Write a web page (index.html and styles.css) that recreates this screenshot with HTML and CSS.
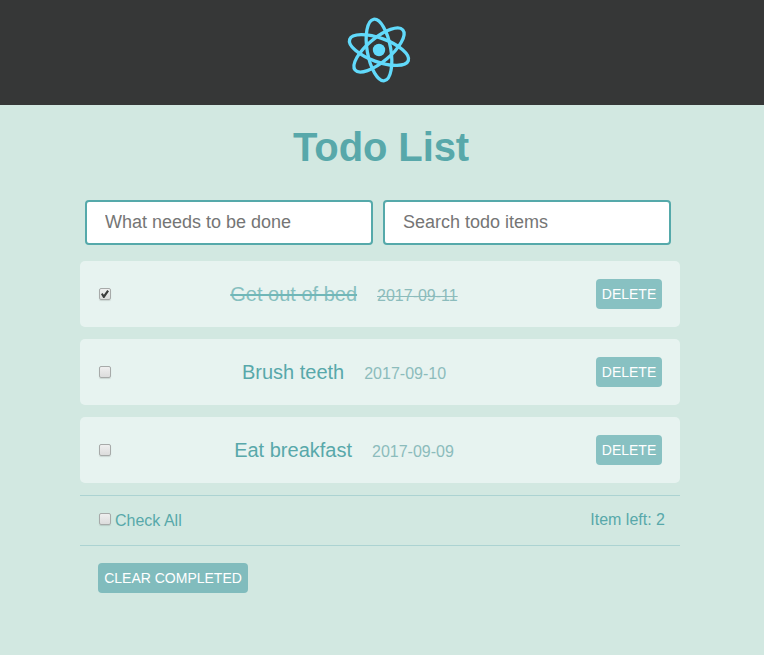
FILE: index.html
```html
<!DOCTYPE html>
<html lang="en">
<head>
<meta charset="utf-8">
<title>Todo List</title>
<link rel="stylesheet" href="styles.css">
</head>
<body>
<header class="header">
  <svg class="logo" viewBox="-36 -36 72 72" aria-hidden="true">
    <circle r="6.2" fill="#61dafb"/>
    <g class="orbits" transform="rotate(20)">
      <ellipse rx="31.2" ry="11.8"/>
      <ellipse rx="31.2" ry="11.8" transform="rotate(60)"/>
      <ellipse rx="31.2" ry="11.8" transform="rotate(120)"/>
    </g>
  </svg>
</header>
<main class="app">
  <h1 class="title">Todo List</h1>
  <form class="fields">
    <input class="field" type="text" placeholder="What needs to be done">
    <input class="field" type="text" placeholder="Search todo items">
  </form>
  <ul class="list">
    <li class="item done">
      <input class="check" type="checkbox" checked>
      <p class="task"><span class="name">Get out of bed</span><span class="date">2017-09-11</span></p>
      <button class="button" type="button">DELETE</button>
    </li>
    <li class="item">
      <input class="check" type="checkbox">
      <p class="task"><span class="name">Brush teeth</span><span class="date">2017-09-10</span></p>
      <button class="button" type="button">DELETE</button>
    </li>
    <li class="item">
      <input class="check" type="checkbox">
      <p class="task"><span class="name">Eat breakfast</span><span class="date">2017-09-09</span></p>
      <button class="button" type="button">DELETE</button>
    </li>
  </ul>
  <div class="summary">
    <label class="all"><input class="check" type="checkbox"><span>Check All</span></label>
    <span>Item left: 2</span>
  </div>
  <button class="button clear" type="button">CLEAR COMPLETED</button>
</main>
</body>
</html>
```
FILE: styles.css
```css
* { box-sizing: border-box; }
body {
  margin: 0;
  min-height: 655px;
  background: #d2e8e1;
  color: #58a8aa;
  font-family: "Liberation Sans", Arial, sans-serif;
  font-size: 16px;
}
.header {
  height: 105px;
  padding: 14px 6px 0 0;
  background: #363737;
  text-align: center;
}
.logo { width: 72px; height: 72px; }
.orbits { fill: none; stroke: #61dafb; stroke-width: 3.3; }
.app { width: 600px; margin-left: 80px; }
.title {
  margin: 0;
  padding: 19px 0 0 2px;
  height: 95px;
  font-size: 40px;
  line-height: 46px;
  letter-spacing: -0.1px;
  text-align: center;
}
.fields { display: flex; gap: 10px; padding: 0 9px 0 5px; }
.field {
  width: 288px;
  height: 45px;
  padding: 0 18px;
  border: 2px solid #55a9aa;
  border-radius: 4px;
  background: #fff;
  font: 18px "Liberation Sans", Arial, sans-serif;
}
.field::placeholder { color: #757575; }
.list {
  display: grid;
  gap: 12px;
  margin: 16px 0 12px;
  padding: 0;
  list-style: none;
}
.item {
  display: grid;
  grid-template-columns: 18px 456px 1fr;
  align-items: center;
  height: 66px;
  padding: 0 18px;
  border-radius: 5px;
  background: #e7f3f0;
}
.check {
  appearance: none;
  display: grid;
  width: 12px;
  height: 12px;
  margin: 0 0 0 1px;
  border: 1px solid #a7aaa9;
  border-radius: 2px;
  background: linear-gradient(#efefef, #dcdcdc);
  box-shadow: 0 1px 1px rgba(0, 0, 0, 0.12);
}
.check:checked::before {
  content: "";
  width: 8px;
  height: 8px;
  margin: 1px;
  background: #3c3c3c;
  clip-path: polygon(0 52%, 18% 38%, 36% 58%, 78% 0, 100% 16%, 42% 100%, 28% 100%);
}
.task { margin: 0; padding-top: 2px; text-align: center; line-height: 24px; }
.name { font-size: 20px; }
.date { margin-left: 20px; color: #8cbcbc; }
.done .name { color: #86bfbf; text-decoration: line-through; text-decoration-color: #70b7b8; }
.done .date { text-decoration: line-through; }
.button {
  justify-self: end;
  width: 66px;
  height: 30px;
  padding: 0;
  border: 0;
  border-radius: 4px;
  background: #88c1c2;
  color: #fff;
  font: 14px "Liberation Sans", Arial, sans-serif;
}
.summary {
  display: flex;
  align-items: center;
  justify-content: space-between;
  height: 51px;
  padding: 0 15px 2px 18px;
  border-top: 1px solid #acd3d2;
  border-bottom: 1px solid #acd3d2;
}
.all { display: flex; align-items: flex-start; gap: 4px; padding-top: 2px; }
.all .check { margin-top: 2px; }
.all span { padding-top: 1px; }
.clear { width: 150px; margin: 17px 0 0 18px; background: #81bcbd; }
```
